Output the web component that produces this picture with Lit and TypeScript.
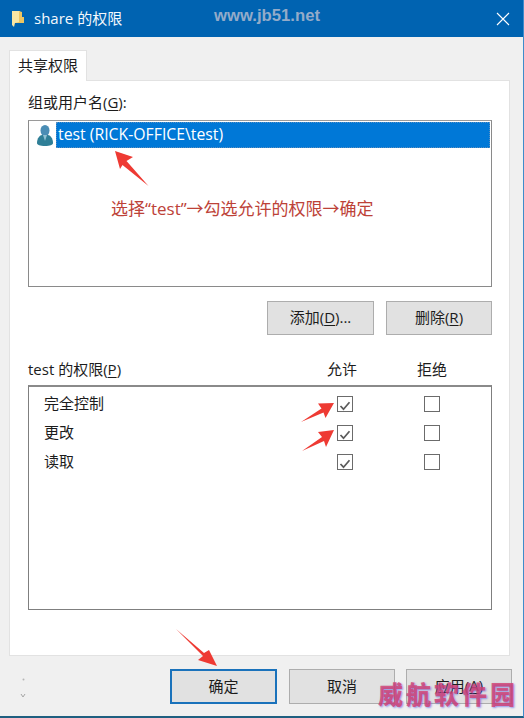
import { LitElement, html, css, svg } from "lit";
import { customElement } from "lit/decorators.js";

const rows = [
  { name: "完全控制" },
  { name: "更改" },
  { name: "读取" },
];

@customElement("app-root")
export class AppRoot extends LitElement {
  static styles = css`
    :host {
      display: block;
      width: 524px;
      height: 718px;
      position: relative;
      overflow: hidden;
      background: #fff;
      color: #1c1c1c;
      font-family: "Open Sans", "Noto Sans CJK SC", sans-serif;
      font-size: 15px;
    }
    .window {
      width: 524px;
      height: 718px;
      display: flex;
      flex-direction: column;
      background: #f0f0f0;
      border-bottom: 2px solid #1f5f80;
      border-right: 1px solid #3f8ccb;
      box-sizing: border-box;
    }
    .title {
      height: 37px;
      flex: none;
      background: #0063b1;
      color: #f4f8fc;
      display: flex;
      align-items: center;
      padding: 0 13px 0 12px;
      gap: 10px;
      font-size: 15px;
    }
    .title .name {
      flex: 1;
      line-height: 37px;
    }
    .body {
      flex: 1;
      display: flex;
      flex-direction: column;
      padding: 13px 13px 0 9px;
    }
    .tab {
      width: 78px;
      height: 31px;
      margin-bottom: -1px;
      padding-bottom: 4px;
      box-sizing: border-box;
      background: #fff;
      border: 1px solid #e2e2e2;
      border-bottom: 0;
      display: flex;
      align-items: center;
      justify-content: center;
      position: relative;
      z-index: 1;
    }
    .panel {
      height: 576px;
      box-sizing: border-box;
      background: #fff;
      border: 1px solid #e2e2e2;
      padding: 11px 17px 0 18px;
      display: flex;
      flex-direction: column;
    }
    .label {
      height: 22px;
      line-height: 20px;
      margin-bottom: 6px;
    }
    .list {
      height: 167px;
      box-sizing: border-box;
      border: 1px solid #8a8a8a;
      border-top-color: #9a9a9a;
      padding: 1px;
      display: flex;
      flex-direction: column;
    }
    .entry {
      display: flex;
      align-items: center;
      height: 26px;
      padding-left: 7px;
      gap: 3px;
    }
    .sel {
      flex: 1;
      height: 26px;
      line-height: 25px;
      background: #0078d7;
      color: #fff;
      padding-left: 2px;
      font-size: 15.8px;
      outline: 1px dotted #5a8fc0;
      outline-offset: -1px;
    }
    .note {
      margin: 50px 0 0 81px;
      color: #bd4238;
      font-size: 17px;
      line-height: 22px;
      white-space: nowrap;
    }
    .btnrow {
      display: flex;
      justify-content: flex-end;
      gap: 12px;
      margin-top: 14px;
    }
    .btn {
      width: 107px;
      height: 34px;
      box-sizing: border-box;
      background: #e1e1e1;
      border: 1px solid #adadad;
      padding-bottom: 3px;
      display: flex;
      align-items: center;
      justify-content: center;
    }
    .btnrow .btn:last-child {
      width: 106px;
    }
    u {
      text-underline-offset: 2px;
    }
    .permhead {
      display: grid;
      grid-template-columns: 1fr 90px 90px;
      margin-top: 23px;
      height: 22px;
      line-height: 22px;
      margin-right: 15px;
    }
    .permhead span:not(:first-child) {
      text-align: center;
    }
    .perms {
      margin-top: 5px;
      height: 225px;
      box-sizing: border-box;
      border: 1px solid #7f7f7f;
      border-top: 2px solid #8a8a8a;
      padding-top: 2px;
    }
    .perm {
      display: grid;
      grid-template-columns: 1fr 16px 16px;
      column-gap: 71px;
      height: 29px;
      align-items: center;
      padding: 0 51px 0 15px;
    }
    .perm > span:first-child {
      position: relative;
      top: -1px;
    }
    .box {
      width: 16px;
      height: 16px;
      box-sizing: border-box;
      border: 1px solid #6b6b6b;
      background: #fff;
      display: block;
    }
    .footer {
      flex: 1;
      display: flex;
      justify-content: flex-end;
      gap: 11px;
      padding: 13px 0 0;
      margin-right: -2px;
    }
    .footer .btn {
      height: 35px;
      width: 106px;
      background: #e1e1e1;
    }
    .footer .primary {
      width: 107px;
      margin-right: 1px;
      border: 2px solid #1a72bb;
    }
    .overlay {
      position: absolute;
      inset: 0;
      pointer-events: none;
    }
    .wm1 {
      position: absolute;
      left: 214px;
      top: 6px;
      color: #93abc9;
      font-family: "Liberation Sans", sans-serif;
      font-weight: 700;
      font-size: 16.700px;
      line-height: 20px;
    }
    .wm2 {
      position: absolute;
      left: 378px;
      top: 675px;
      color: rgba(212, 60, 110, 0.8);
      font-family: "Noto Sans CJK SC", sans-serif;
      font-weight: 900;
      font-size: 25px;
      line-height: 36px;
      letter-spacing: 3px;
      white-space: nowrap;
      text-shadow: 1px 1px 2px rgba(90, 90, 220, 0.6);
    }
  `;

  private folder() {
    return html`<svg width="12" height="18" viewBox="0 0 12 18">
      <path d="M0 1h8v12H3l-1 4-2-2z" fill="#f9e6a4" />
      <path d="M7 1l3 1v5h2v6H3l4-1z" fill="#edc562" />
    </svg>`;
  }

  private close() {
    return html`<svg width="14" height="14" viewBox="0 0 14 14">
      <path d="M1 1l12 12M13 1L1 13" stroke="#fff" stroke-width="1.1" fill="none" />
    </svg>`;
  }

  private user() {
    return html`<svg width="16" height="21" viewBox="0 0 16 21">
      <ellipse cx="8" cy="5.500" rx="4.500" ry="5.500" fill="#4a8db5" />
      <path d="M0 18c0-5 3-8 5-8h6c2 0 5 3 5 8 0 2-3 3-8 3s-8-1-8-3z" fill="#2f7f97" />
      <path d="M6 10h4l-2 6z" fill="#8fc0d4" />
    </svg>`;
  }

  private check(on: boolean) {
    return html`<span class="box">${on
      ? html`<svg class="tick" width="14" height="14" viewBox="0 0 14 14">
          <path d="M2.500 7l3 3.200 6-7" stroke="#5a5a5a" stroke-width="1.700" fill="none" />
        </svg>`
      : ""}</span>`;
  }

  render() {
    return html`
      <div class="window">
        <div class="title">
          ${this.folder()}
          <span class="name">share 的权限</span>
          ${this.close()}
        </div>
        <div class="body">
          <div class="tab">共享权限</div>
          <div class="panel">
            <div class="label">组或用户名(<u>G</u>):</div>
            <div class="list">
              <div class="entry">
                ${this.user()}
                <div class="sel">test (RICK-OFFICE\\test)</div>
              </div>
              <div class="note">选择“test”→勾选允许的权限→确定</div>
            </div>
            <div class="btnrow">
              <div class="btn">添加(<u>D</u>)...</div>
              <div class="btn">删除(<u>R</u>)</div>
            </div>
            <div class="permhead">
              <span>test 的权限(<u>P</u>)</span>
              <span>允许</span>
              <span>拒绝</span>
            </div>
            <div class="perms">
              ${rows.map(
                (r) => html`<div class="perm">
                  <span>${r.name}</span>
                  ${this.check(true)} ${this.check(false)}
                </div>`
              )}
            </div>
          </div>
          <div class="footer">
            <div class="btn primary">确定</div>
            <div class="btn">取消</div>
            <div class="btn">应用(<u>A</u>)</div>
          </div>
        </div>
      </div>
      <svg class="overlay" width="524" height="718" viewBox="0 0 524 718">
        ${svg`
          <path d="M115 151L133 157 126.500 161 148.500 186 122.500 165 120 169z" fill="#ee3a33" />
          <path d="M334 403L318 403.500 321.500 408.500 301 422 323.500 412.500 325.500 418z" fill="#ee3a33" />
          <path d="M334 430L318 432 322 437 302 451 324 441 326 447z" fill="#ee3a33" />
          <path d="M176 629L204 653 209 650 217 666 198 660 203 656z" fill="#ee3a33" />
          <circle cx="23.500" cy="679.500" r="1" fill="#b5b5b5" />
          <path d="M21 694l2 3 2-3" stroke="#a5a5a5" fill="none" />
        `}
      </svg>
      <div class="wm1">www.jb51.net</div>
      <div class="wm2">威航软件园</div>
    `;
  }
}
